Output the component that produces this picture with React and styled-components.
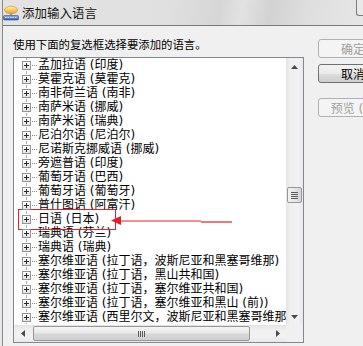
import React from 'react';
import styled, { createGlobalStyle } from 'styled-components';

const CJK = `"Noto Sans CJK SC", "Noto Sans", sans-serif`;
const LIST_FONT = `"DejaVu Sans", "Noto Sans CJK SC", sans-serif`;

const Global = createGlobalStyle`
  html, body { margin: 0; padding: 0; width: 363px; height: 346px; overflow: hidden; background: #ececec; }
  #root { width: 363px; height: 346px; }
`;

const Screen = styled.div`
  width: 363px;
  height: 346px;
  display: flex;
  padding-left: 2px;
  box-sizing: border-box;
  overflow: hidden;
  background: #e6e6e6;
`;

const Window = styled.div`
  flex: 1;
  min-width: 0;
  display: flex;
  flex-direction: column;
  border-left: 1px solid #8a8a8a;
  background: #f0f0f0;
`;

const TitleBar = styled.div`
  height: 25px;
  flex: none;
  display: flex;
  align-items: center;
  gap: 3px;
  border-bottom: 1px solid #7a7a7a;
  background: linear-gradient(100deg, #e3e3e3 0%, #e0e0e0 45%, #d6d6d6 60%, #e2e2e2 66%, #d2d2d2 74%, #dedede 84%, #e6e6e6 100%);
`;

const TitleText = styled.span`
  font-family: ${CJK};
  font-size: 12.5px;
  line-height: 16px;
  color: #151515;
`;

const CloseEdge = styled.div`
  margin-left: auto;
  align-self: flex-start;
  width: 6px;
  height: 15px;
  border-left: 1px solid #7c7c7c;
  border-bottom: 1px solid #7c7c7c;
  border-bottom-left-radius: 3px;
  background: #e9e9e9;
`;

const Body = styled.div`
  flex: 1;
  min-height: 0;
  display: flex;
  gap: 14px;
  padding: 11px 0 0 10px;
  overflow: hidden;
`;

const LeftCol = styled.div`
  width: 291px;
  flex: none;
  display: flex;
  flex-direction: column;
`;

const Label = styled.div`
  font-family: ${CJK};
  font-size: 11.4px;
  line-height: 14px;
  height: 14px;
  color: #000;
  margin-bottom: 6px;
  white-space: nowrap;
`;

const ListBox = styled.div`
  position: relative;
  height: 286px;
  flex: none;
  box-sizing: border-box;
  border: 1px solid #828790;
  background: #fff;
  display: flex;
  flex-direction: column;
`;

const ListMain = styled.div`
  flex: 1;
  min-height: 0;
  display: flex;
`;

const ListContent = styled.div`
  flex: 1;
  min-width: 0;
  overflow: hidden;
  background: #fff;
`;

const Row = styled.div`
  position: relative;
  height: 14px;
  display: flex;
  align-items: center;
  padding-left: 8px;
  white-space: nowrap;
  font-family: ${LIST_FONT};
  font-size: 12px;
  line-height: 14px;
  color: #000;
  &::before {
    content: '';
    position: absolute;
    left: 12px;
    top: 0;
    bottom: 0;
    border-left: 1px dotted #b0b0b0;
  }
`;

const Expander = styled.span`
  position: relative;
  z-index: 1;
  flex: none;
  width: 9px;
  height: 9px;
  box-sizing: border-box;
  border: 1px solid #939393;
  background: linear-gradient(#ffffff, #e4e4e4);
  &::before {
    content: '';
    position: absolute;
    left: 1px;
    top: 3px;
    width: 5px;
    height: 1px;
    background: #2a2a2a;
  }
  &::after {
    content: '';
    position: absolute;
    left: 3px;
    top: 1px;
    width: 1px;
    height: 5px;
    background: #2a2a2a;
  }
`;

const Connector = styled.span`
  flex: none;
  width: 5px;
  height: 0;
  border-top: 1px dotted #8a8a8a;
  margin: 1px 1px 0 1px;
`;

const VScroll = styled.div`
  width: 17px;
  flex: none;
  display: flex;
  flex-direction: column;
  align-items: center;
  background: linear-gradient(90deg, #e4e4e4 0%, #efefef 25%, #f2f2f2 70%, #e9e9e9 100%);
`;

const ArrowBtn = styled.div`
  width: 17px;
  height: 17px;
  flex: none;
  display: flex;
  align-items: center;
  justify-content: center;
`;

const VThumb = styled.div`
  width: 15px;
  height: 16px;
  margin-top: ${p => p.$offset}px;
  box-sizing: border-box;
  border: 1px solid #979797;
  border-radius: 2px;
  background: linear-gradient(90deg, #f3f3f3, #e6e6e6 50%, #d6d6d6);
  display: flex;
  flex-direction: column;
  align-items: center;
  justify-content: center;
  gap: 1px;
`;

const GripH = styled.span`
  width: 7px;
  height: 1px;
  background: #5c5c5c;
`;

const Spacer = styled.div`
  flex: 1;
`;

const HScrollRow = styled.div`
  height: 17px;
  flex: none;
  display: flex;
`;

const HScroll = styled.div`
  flex: 1;
  display: flex;
  align-items: center;
  background: linear-gradient(#e3e3e3 0%, #efefef 25%, #f2f2f2 70%, #e8e8e8 100%);
`;

const HThumb = styled.div`
  width: ${p => p.$width}px;
  height: 15px;
  margin-left: 2px;
  box-sizing: border-box;
  border: 1px solid #979797;
  border-radius: 2px;
  background: linear-gradient(#f6f6f6, #e8e8e8 45%, #d8d8d8 55%, #cfcfcf);
  display: flex;
  align-items: center;
  justify-content: center;
  gap: 1px;
`;

const GripV = styled.span`
  width: 1px;
  height: 6px;
  background: #5c5c5c;
`;

const Corner = styled.div`
  width: 17px;
  flex: none;
  background: #f0f0f0;
`;

const Highlight = styled.div`
  position: absolute;
  left: 4px;
  top: 151px;
  width: 98px;
  height: 21px;
  box-sizing: border-box;
  border: 1px solid #ec1c24;
  pointer-events: none;
`;

const ArrowSvg = styled.svg`
  position: absolute;
  left: 95px;
  top: 156px;
  overflow: visible;
`;

const ButtonCol = styled.div`
  flex: none;
  display: flex;
  flex-direction: column;
  padding-top: 2px;
`;

const Button = styled.div`
  width: 70px;
  height: 19px;
  flex: none;
  box-sizing: border-box;
  border-radius: 3px;
  margin-top: ${p => p.$gap || 0}px;
  display: flex;
  align-items: center;
  justify-content: center;
  font-family: ${LIST_FONT};
  font-size: 12px;
  white-space: nowrap;
  border: 1px solid ${p => (p.$disabled ? '#adb2b5' : '#707070')};
  color: ${p => (p.$disabled ? '#a0a0a0' : '#000')};
  background: ${p =>
    p.$disabled
      ? '#f4f4f4'
      : 'linear-gradient(#f2f2f2 0%, #ebebeb 50%, #dddddd 51%, #cfcfcf 100%)'};
`;

const items = [
  '孟加拉语 (印度)',
  '莫霍克语 (莫霍克)',
  '南非荷兰语 (南非)',
  '南萨米语 (挪威)',
  '南萨米语 (瑞典)',
  '尼泊尔语 (尼泊尔)',
  '尼诺斯克挪威语 (挪威)',
  '旁遮普语 (印度)',
  '葡萄牙语 (巴西)',
  '葡萄牙语 (葡萄牙)',
  '普什图语 (阿富汗)',
  '日语 (日本)',
  '瑞典语 (芬兰)',
  '瑞典语 (瑞典)',
  '塞尔维亚语 (拉丁语，波斯尼亚和黑塞哥维那)',
  '塞尔维亚语 (拉丁语，黑山共和国)',
  '塞尔维亚语 (拉丁语，塞尔维亚共和国)',
  '塞尔维亚语 (拉丁语，塞尔维亚和黑山 (前))',
  '塞尔维亚语 (西里尔文，波斯尼亚和黑塞哥维那)',
];

const Tri = ({ dir }) => {
  const pts = {
    up: '0,4 3.5,0 7,4',
    down: '0,0 3.5,4 7,0',
    left: '4,0 0,3.5 4,7',
    right: '0,0 4,3.5 0,7',
  }[dir];
  const w = dir === 'up' || dir === 'down' ? 7 : 4;
  const h = dir === 'up' || dir === 'down' ? 4 : 7;
  return (
    <svg width={w} height={h} viewBox={`0 0 ${w} ${h}`}>
      <polygon points={pts} fill="#4a4a4a" />
    </svg>
  );
};

const TitleIcon = () => (
  <svg width="16" height="16" viewBox="0 0 16 16">
    <defs>
      <linearGradient id="cloud" x1="0" y1="0" x2="0" y2="1">
        <stop offset="0" stopColor="#fff3b0" />
        <stop offset="1" stopColor="#e9a21c" />
      </linearGradient>
      <linearGradient id="kb" x1="0" y1="0" x2="0" y2="1">
        <stop offset="0" stopColor="#8fb4ea" />
        <stop offset="1" stopColor="#2f5fb3" />
      </linearGradient>
    </defs>
    <ellipse cx="8" cy="5" rx="6.5" ry="3.8" fill="url(#cloud)" stroke="#c98a16" strokeWidth="0.6" />
    <rect x="7" y="8.5" width="2" height="2" fill="#9a9a9a" />
    <rect x="0.5" y="10.5" width="15" height="4.5" rx="1" fill="url(#kb)" stroke="#2a4f8f" strokeWidth="0.6" />
    <rect x="2" y="12" width="1.5" height="1" fill="#dfe9fa" />
    <rect x="4.5" y="12" width="1.5" height="1" fill="#dfe9fa" />
    <rect x="7" y="12" width="1.5" height="1" fill="#dfe9fa" />
    <rect x="9.5" y="12" width="1.5" height="1" fill="#dfe9fa" />
    <rect x="12" y="12" width="1.5" height="1" fill="#dfe9fa" />
  </svg>
);

export default function App() {
  return (
    <>
      <Global />
      <Screen>
        <Window>
          <TitleBar>
            <TitleIcon />
            <TitleText>添加输入语言</TitleText>
            <CloseEdge />
          </TitleBar>
          <Body>
            <LeftCol>
              <Label>使用下面的复选框选择要添加的语言。</Label>
              <ListBox>
                <ListMain>
                  <ListContent>
                    {items.map(t => (
                      <Row key={t}>
                        <Expander />
                        <Connector />
                        <span>{t}</span>
                      </Row>
                    ))}
                  </ListContent>
                  <VScroll>
                    <ArrowBtn><Tri dir="up" /></ArrowBtn>
                    <VThumb $offset={112}>
                      <GripH />
                      <GripH />
                      <GripH />
                      <GripH />
                    </VThumb>
                    <Spacer />
                    <ArrowBtn><Tri dir="down" /></ArrowBtn>
                  </VScroll>
                </ListMain>
                <HScrollRow>
                  <HScroll>
                    <ArrowBtn><Tri dir="left" /></ArrowBtn>
                    <HThumb $width={217}>
                      <GripV />
                      <GripV />
                      <GripV />
                      <GripV />
                    </HThumb>
                    <Spacer />
                    <ArrowBtn><Tri dir="right" /></ArrowBtn>
                  </HScroll>
                  <Corner />
                </HScrollRow>
                <Highlight />
                <ArrowSvg width="125" height="14" viewBox="0 0 125 14">
                  <polygon points="2,6.5 12,2 12,11" fill="#ec1c24" />
                  <line x1="11" y1="7" x2="92" y2="7" stroke="#ec1c24" strokeWidth="1.2" />
                  <line x1="92" y1="8" x2="123" y2="8" stroke="#ec1c24" strokeWidth="1.2" />
                </ArrowSvg>
              </ListBox>
            </LeftCol>
            <ButtonCol>
              <Button $disabled>确定</Button>
              <Button $gap={6}>取消</Button>
              <Button $gap={15} $disabled>预览 (P)</Button>
            </ButtonCol>
          </Body>
        </Window>
      </Screen>
    </>
  );
}
